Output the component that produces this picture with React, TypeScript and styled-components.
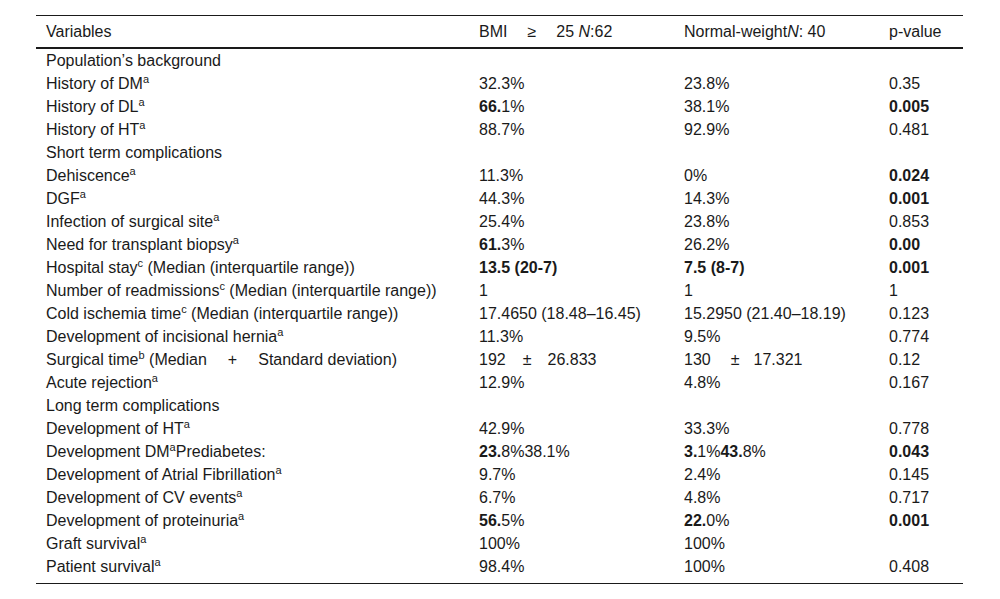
import styled, { createGlobalStyle } from 'styled-components';
import type { ReactNode } from 'react';

const GlobalStyle = createGlobalStyle`
  body {
    margin: 0;
    background: #ffffff;
    font-family: 'Liberation Sans', Arial, sans-serif;
    color: #1a1a1a;
  }
`;

const Page = styled.div`
  padding: 15px 37px 0 36px;
`;

const Frame = styled.div`
  width: 927px;
  border-top: 1px solid #1a1a1a;
  border-bottom: 1px solid #1a1a1a;
  padding-bottom: 5px;
`;

const Table = styled.table`
  width: 100%;
  table-layout: fixed;
  border-collapse: collapse;
  font-size: 16px;
`;

const HeadCell = styled.th<{ $w: number }>`
  width: ${(p) => p.$w}px;
  height: 31px;
  padding: 0 10px;
  text-align: left;
  font-weight: normal;
  border-bottom: 2px solid #1a1a1a;
  white-space: nowrap;
`;

const Cell = styled.td`
  height: 23px;
  padding: 0 10px;
  white-space: nowrap;
  line-height: 18px;
`;

const Sup = styled.sup`
  font-size: 11px;
  line-height: 0;
  vertical-align: 6px;
`;

const Gap = styled.span<{ $w: number }>`
  display: inline-block;
  width: ${(p) => p.$w}px;
`;

type Row = [ReactNode, ReactNode?, ReactNode?, ReactNode?];

const a = <Sup>a</Sup>;
const b = <Sup>b</Sup>;
const c = <Sup>c</Sup>;

const rows: Row[] = [
  ['Population’s background'],
  [<>History of DM{a}</>, '32.3%', '23.8%', '0.35'],
  [<>History of DL{a}</>, <><b>66.</b>1%</>, '38.1%', <b>0.005</b>],
  [<>History of HT{a}</>, '88.7%', '92.9%', '0.481'],
  ['Short term complications'],
  [<>Dehiscence{a}</>, '11.3%', '0%', <b>0.024</b>],
  [<>DGF{a}</>, '44.3%', '14.3%', <b>0.001</b>],
  [<>Infection of surgical site{a}</>, '25.4%', '23.8%', '0.853'],
  [<>Need for transplant biopsy{a}</>, <><b>61.</b>3%</>, '26.2%', <b>0.00</b>],
  [<>Hospital stay{c} (Median (interquartile range))</>, <b>13.5 (20-7)</b>, <b>7.5 (8-7)</b>, <b>0.001</b>],
  [<>Number of readmissions{c} (Median (interquartile range))</>, '1', '1', '1'],
  [<>Cold ischemia time{c} (Median (interquartile range))</>, '17.4650 (18.48–16.45)', '15.2950 (21.40–18.19)', '0.123'],
  [<>Development of incisional hernia{a}</>, '11.3%', '9.5%', '0.774'],
  [
    <>Surgical time{b} (Median<Gap $w={21} />+<Gap $w={21} />Standard deviation)</>,
    <>192<Gap $w={17} />±<Gap $w={16} />26.833</>,
    <>130<Gap $w={20} />±<Gap $w={14} />17.321</>,
    '0.12',
  ],
  [<>Acute rejection{a}</>, '12.9%', '4.8%', '0.167'],
  ['Long term complications'],
  [<>Development of HT{a}</>, '42.9%', '33.3%', '0.778'],
  [<>Development DM{a}Prediabetes:</>, <><b>23.</b>8%38.1%</>, <><b>3.</b>1%<b>43.</b>8%</>, <b>0.043</b>],
  [<>Development of Atrial Fibrillation{a}</>, '9.7%', '2.4%', '0.145'],
  [<>Development of CV events{a}</>, '6.7%', '4.8%', '0.717'],
  [<>Development of proteinuria{a}</>, <><b>56.</b>5%</>, <><b>22.</b>0%</>, <b>0.001</b>],
  [<>Graft survival{a}</>, '100%', '100%', ''],
  [<>Patient survival{a}</>, '98.4%', '100%', '0.408'],
];

export default function App() {
  return (
    <>
      <GlobalStyle />
      <Page>
        <Frame>
          <Table>
            <thead>
              <tr>
                <HeadCell $w={413}>Variables</HeadCell>
                <HeadCell $w={185}>
                  BMI<Gap $w={20} />≥<Gap $w={20} />25 <i>N</i>:62
                </HeadCell>
                <HeadCell $w={185}>
                  Normal-weight<i>N</i>: 40
                </HeadCell>
                <HeadCell $w={64}>p-value</HeadCell>
              </tr>
            </thead>
            <tbody>
              {rows.map((r, i) => (
                <tr key={i}>
                  <Cell>{r[0]}</Cell>
                  <Cell>{r[1]}</Cell>
                  <Cell>{r[2]}</Cell>
                  <Cell>{r[3]}</Cell>
                </tr>
              ))}
            </tbody>
          </Table>
        </Frame>
      </Page>
    </>
  );
}
